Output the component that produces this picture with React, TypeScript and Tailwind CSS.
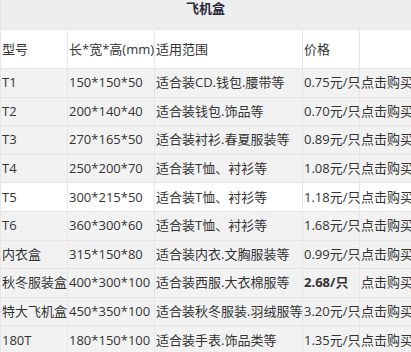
const ROWS = [
  { model: "T1", size: "150*150*50", use: "适合装CD.钱包.腰带等", price: "0.75元/只" },
  { model: "T2", size: "200*140*40", use: "适合装钱包.饰品等", price: "0.70元/只" },
  { model: "T3", size: "270*165*50", use: "适合装衬衫.春夏服装等", price: "0.89元/只" },
  { model: "T4", size: "250*200*70", use: "适合装T恤、衬衫等", price: "1.08元/只" },
  { model: "T5", size: "300*215*50", use: "适合装T恤、衬衫等", price: "1.18元/只", active: true },
  { model: "T6", size: "360*300*60", use: "适合装T恤、衬衫等", price: "1.68元/只" },
  { model: "内衣盒", size: "315*150*80", use: "适合装内衣.文胸服装等", price: "0.99元/只" },
  { model: "秋冬服装盒", size: "400*300*100", use: "适合装西服.大衣棉服等", price: "2.68/只", bold: true },
  { model: "特大飞机盒", size: "450*350*100", use: "适合装秋冬服装.羽绒服等", price: "3.20元/只" },
  { model: "180T", size: "180*150*100", use: "适合装手表.饰品类等", price: "1.35元/只" },
];

export default function App() {
  return (
    <div className="w-[411px] h-[352px] overflow-hidden bg-white">
      <div
        className="w-[430px] grid grid-cols-[66px_86px_147px_56px_70px] grid-rows-[29px_38px_repeat(10,27.6px)] gap-px bg-[#e6e6e6] px-px text-[13px] text-[#333] whitespace-nowrap"
        style={{ fontFamily: '"Open Sans", "Noto Sans CJK SC", sans-serif' }}
      >
        <div className="col-span-5 bg-[#eeeeee] pl-[185px] pt-px font-bold leading-[14px] text-[#2a2a3a]">
          飞机盒
        </div>

        {["型号", "长*宽*高(mm)", "适用范围", "价格", ""].map((h, i) => (
          <div key={i} className="bg-white flex items-center pl-px leading-none">
            {h}
          </div>
        ))}

        {ROWS.map((r) => {
          const bg = r.active ? "bg-white" : "bg-[#f2f2f2]";
          return [r.model, r.size, r.use, r.price, "点击购买"].map((c, i) => (
            <div
              key={r.model + i}
              className={`${bg} flex items-center pl-px leading-none ${
                i === 3 && r.bold ? "font-bold" : ""
              }`}
            >
              {c}
            </div>
          ));
        })}
      </div>
    </div>
  );
}
